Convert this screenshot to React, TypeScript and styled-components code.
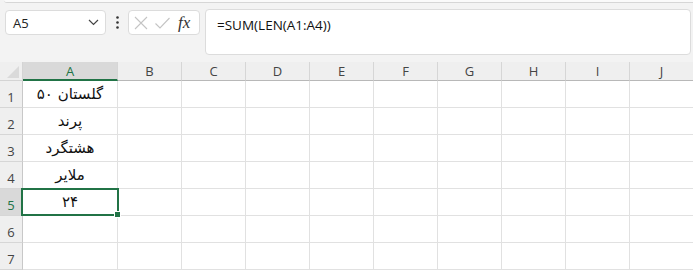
import React from 'react';
import styled, { createGlobalStyle, css } from 'styled-components';

const GREEN = '#217346';
const GRID = '#e1e1e1';

const GlobalStyle = createGlobalStyle`
  html, body {
    margin: 0;
    padding: 0;
    background: #ffffff;
    overflow: hidden;
  }
  body {
    font-family: "Open Sans", "Liberation Sans", sans-serif;
  }
`;

const Page = styled.div`
  width: 693px;
  height: 271px;
  display: flex;
  flex-direction: column;
  background: #ffffff;
`;

const Toolbar = styled.div`
  height: 62px;
  background: #f3f3f3;
  position: relative;
  display: flex;
  align-items: flex-start;
  padding: 9px 2px 0 5px;
  box-sizing: border-box;
`;

const RibbonEdge = styled.div`
  position: absolute;
  left: 4px;
  right: 0;
  top: 0;
  height: 2px;
  background: #fafafa;
  border-bottom: 1px solid #d6d6d6;
  border-bottom-left-radius: 4px;
`;

const NameBox = styled.div`
  width: 101px;
  height: 25px;
  margin-top: 1px;
  box-sizing: border-box;
  background: #ffffff;
  border: 1px solid #dcdcdc;
  border-radius: 4px;
  display: flex;
  align-items: center;
  justify-content: space-between;
  padding: 0 6px 0 7px;
  font-size: 13px;
  color: #222;
`;

const Dots = styled.div`
  width: 22px;
  display: flex;
  justify-content: center;
  padding-top: 7px;
`;

const FxButtons = styled.div`
  width: 72px;
  height: 25px;
  margin-top: 1px;
  box-sizing: border-box;
  background: #ffffff;
  border: 1px solid #dcdcdc;
  border-radius: 4px;
  display: flex;
  align-items: center;
  padding: 0 3px 0 4px;
  gap: 5px;
`;

const FxLabel = styled.span`
  font-family: "Liberation Serif", serif;
  font-style: italic;
  font-size: 17px;
  color: #333;
  margin-left: 2px;
  line-height: 1;
`;

const FormulaBar = styled.div`
  flex: 1;
  margin-left: 5px;
  height: 46px;
  box-sizing: border-box;
  background: #ffffff;
  border: 1px solid #dcdcdc;
  border-radius: 4px;
  padding: 6px 0 0 11px;
  font-size: 13.5px;
  color: #111;
`;

const Grid = styled.div`
  display: grid;
  grid-template-columns: 23px 95px repeat(9, 64px);
  grid-auto-rows: 27px;
  grid-template-rows: 19px;
`;

const Corner = styled.div`
  background: #efefef;
  border-right: 1px solid #d4d4d4;
  border-bottom: 1px solid #d4d4d4;
  box-sizing: border-box;
  overflow: hidden;
`;

const ColHead = styled.div<{ $active?: boolean }>`
  box-sizing: border-box;
  background: #efefef;
  border-right: 1px solid #d6d6d6;
  border-bottom: 1px solid #b8b8b8;
  display: flex;
  align-items: center;
  justify-content: center;
  font-size: 13px;
  color: #444;
  ${({ $active }) =>
    $active &&
    css`
      background: #d9d9d9;
      color: ${GREEN};
      border-bottom: 2px solid ${GREEN};
      padding-top: 1px;
    `}
`;

const RowHead = styled.div<{ $active?: boolean }>`
  box-sizing: border-box;
  background: #efefef;
  border-right: 1px solid #c8c8c8;
  border-bottom: 1px solid #d6d6d6;
  display: flex;
  align-items: flex-end;
  justify-content: center;
  padding-bottom: 1px;
  font-size: 13px;
  color: #444;
  ${({ $active }) =>
    $active &&
    css`
      background: #d9d9d9;
      color: ${GREEN};
    `}
`;

const Cell = styled.div<{ $selected?: boolean }>`
  box-sizing: border-box;
  border-right: 1px solid ${GRID};
  border-bottom: 1px solid ${GRID};
  display: flex;
  align-items: center;
  justify-content: center;
  font-family: "DejaVu Sans", "Noto Sans", sans-serif;
  font-size: 15px;
  color: #111;
  direction: rtl;
  position: relative;
  ${({ $selected }) =>
    $selected &&
    css`
      &::after {
        content: '';
        position: absolute;
        left: -2px;
        top: -1px;
        right: -2px;
        bottom: -1px;
        border: 2px solid ${GREEN};
        pointer-events: none;
      }
      &::before {
        content: '';
        position: absolute;
        right: -4px;
        bottom: -3px;
        width: 5px;
        height: 5px;
        background: ${GREEN};
        border: 1px solid #ffffff;
        z-index: 2;
      }
    `}
`;

const columns = ['A', 'B', 'C', 'D', 'E', 'F', 'G', 'H', 'I', 'J'];
const values = ['گلستان ۵۰', 'پرند', 'هشتگرد', 'ملایر', '۲۴', '', ''];

const Chevron = () => (
  <svg width="11" height="7" viewBox="0 0 11 7">
    <path d="M1 1 L5.5 5.5 L10 1" fill="none" stroke="#444" strokeWidth="1.2" />
  </svg>
);

const VDots = () => (
  <svg width="3" height="13" viewBox="0 0 3 13">
    <circle cx="1.5" cy="1.5" r="1.3" fill="#333" />
    <circle cx="1.5" cy="6.5" r="1.3" fill="#333" />
    <circle cx="1.5" cy="11.5" r="1.3" fill="#333" />
  </svg>
);

const CancelIcon = () => (
  <svg width="16" height="16" viewBox="0 0 16 16">
    <path d="M2 2 L14 14 M14 2 L2 14" stroke="#c4c4c4" strokeWidth="1.1" fill="none" />
  </svg>
);

const CheckIcon = () => (
  <svg width="17" height="16" viewBox="0 0 17 16">
    <path d="M1.5 8.5 L6 13 L15.5 3" stroke="#c4c4c4" strokeWidth="1.1" fill="none" />
  </svg>
);

const CornerTriangle = () => (
  <svg width="23" height="19" viewBox="0 0 23 19" style={{ display: 'block' }}>
    <polygon points="19,4 19,16 7,16" fill="#dadada" />
  </svg>
);

export default function App() {
  return (
    <>
      <GlobalStyle />
      <Page>
        <Toolbar>
          <RibbonEdge />
          <NameBox>
            <span>A5</span>
            <Chevron />
          </NameBox>
          <Dots>
            <VDots />
          </Dots>
          <FxButtons>
            <CancelIcon />
            <CheckIcon />
            <FxLabel>fx</FxLabel>
          </FxButtons>
          <FormulaBar>=SUM(LEN(A1:A4))</FormulaBar>
        </Toolbar>
        <Grid>
          <Corner>
            <CornerTriangle />
          </Corner>
          {columns.map((c) => (
            <ColHead key={c} $active={c === 'A'}>
              {c}
            </ColHead>
          ))}
          {values.map((v, i) => (
            <React.Fragment key={i}>
              <RowHead $active={i === 4}>{i + 1}</RowHead>
              <Cell $selected={i === 4}>{v}</Cell>
              {columns.slice(1).map((c) => (
                <Cell key={c} />
              ))}
            </React.Fragment>
          ))}
        </Grid>
      </Page>
    </>
  );
}
